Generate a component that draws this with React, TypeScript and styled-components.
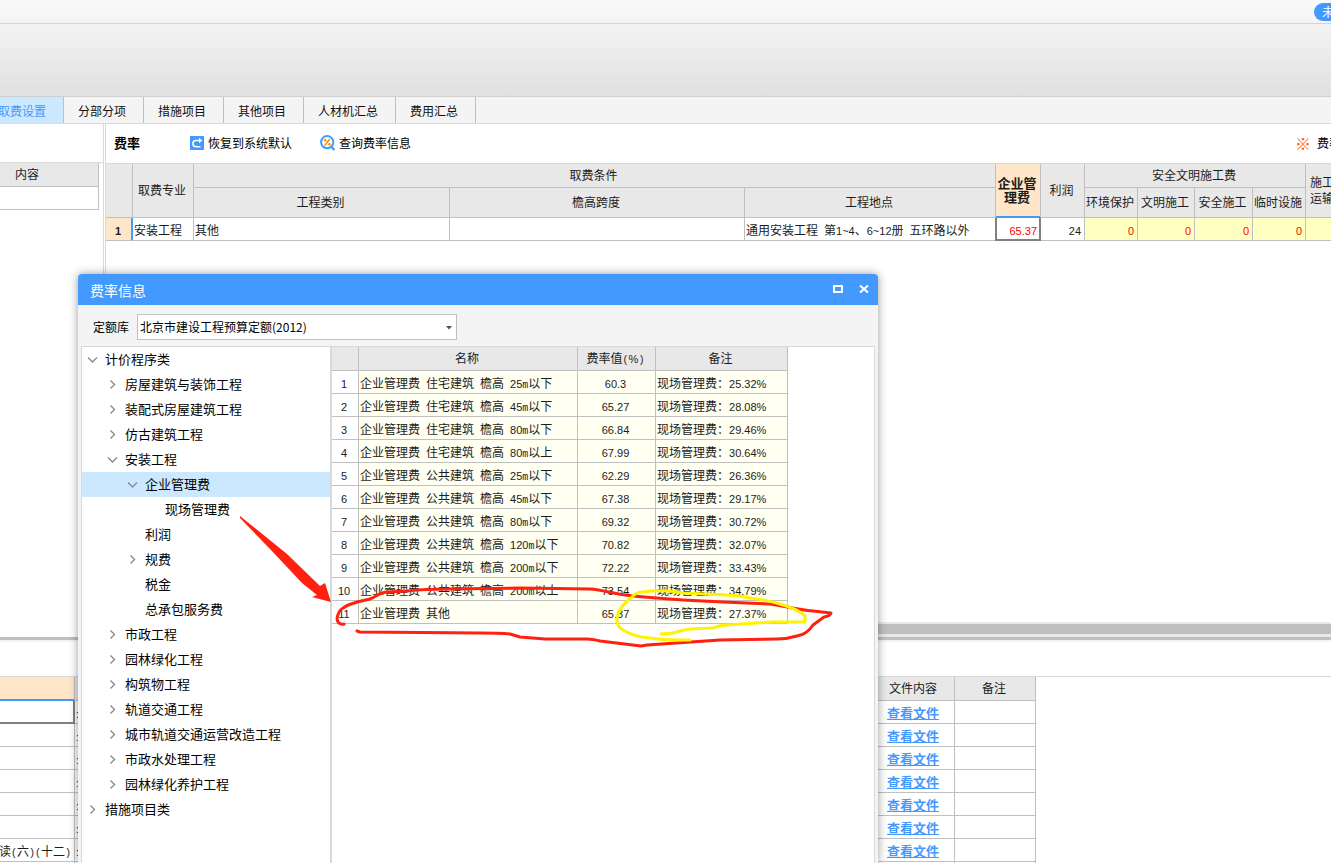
import React from "react";
import styled, { createGlobalStyle, css } from "styled-components";

const line = "#c0c0c0";
const softLine = "#d9d9d9";
const blue = "#4499ff";

const GlobalStyle = createGlobalStyle`
  *, *::before, *::after { box-sizing: border-box; }
  html, body, #root { height: 100%; }
  body {
    margin: 0;
    overflow: hidden;
    background: #fff;
    color: #1c1c1c;
    font-family: "Noto Sans CJK SC", sans-serif;
    font-size: 12px;
    line-height: 16px;
  }
  button, select { font: inherit; color: inherit; }
`;

/* ---------- text ---------- */

const Digits = styled.span`
  font-family: "Liberation Sans", sans-serif;
  font-size: 11px;
  line-height: 1;
`;

const HalfWidth = styled.span`
  font-family: "Liberation Mono", monospace;
  font-size: 10px;
  line-height: 1;
  white-space: pre;
`;

/* Chinese text keeps the base font; digits and half-width marks get their own. */
function Mixed({ text }: { text: string }) {
  const parts = text.match(/[ ()m]|[0-9.%~:]+|[^ ()m0-9.%~:]+/g) ?? [];
  return (
    <>
      {parts.map((p, i) => {
        if (/^[ ()m]$/.test(p)) return <HalfWidth key={i}>{p}</HalfWidth>;
        if (/^[0-9.%~:]/.test(p)) return <Digits key={i}>{p}</Digits>;
        return <React.Fragment key={i}>{p}</React.Fragment>;
      })}
    </>
  );
}

/* ---------- window frame ---------- */

const Screen = styled.div`
  position: relative;
  display: flex;
  flex-direction: column;
  height: 100vh;
  overflow: hidden;
`;

const TitleBar = styled.header`
  display: flex;
  justify-content: flex-end;
  align-items: center;
  height: 24px;
  flex: none;
  overflow: hidden;
  border-bottom: 1px solid #d4d4d4;
  background: linear-gradient(#fafafa, #f4f4f4);
`;

const LoginPill = styled.button`
  flex: none;
  height: 18px;
  margin-right: -35px;
  padding: 0 8px;
  border: 0;
  border-radius: 9px;
  background: ${blue};
  color: #fff;
  line-height: 18px;
`;

const Ribbon = styled.div`
  flex: none;
  height: 73px;
  border-bottom: 1px solid #cfcfcf;
  background: linear-gradient(#f3f3f3, #e0e0e0);
`;

const Tabs = styled.nav`
  display: flex;
  flex: none;
  height: 27px;
  margin-left: -16px;
  border-bottom: 1px solid #dcdcdc;
  background: #f4f4f4;
`;

const Tab = styled.button<{ $active?: boolean }>`
  flex: none;
  padding: 2px 17px 0 14px;
  border: 0;
  border-right: 1px solid ${line};
  background: ${(p) => (p.$active ? "#cce8ff" : "transparent")};
  color: ${(p) => (p.$active ? blue : "#111")};
`;

/* ---------- data grids ---------- */

const Grid = styled.table<{ $width: number }>`
  flex: none;
  width: ${(p) => p.$width}px;
  table-layout: fixed;
  border-collapse: separate;
  border-spacing: 0;
`;

const HeadCell = styled.th<{ $current?: boolean; $h?: number }>`
  height: ${(p) => p.$h ?? 24}px;
  padding: 0 2px 2px 0;
  border-right: 1px solid ${line};
  border-bottom: 1px solid ${line};
  background: #e8e8e8;
  font-weight: normal;
  white-space: nowrap;
  ${(p) =>
    p.$current &&
    css`
      border-bottom-color: ${blue};
      background: #ffe6c8;
      box-shadow: inset 0 -1px ${blue};
      font-size: 13px;
      line-height: 14px;
      font-weight: bold;
      white-space: normal;
    `}
`;

const Cell = styled.td<{
  $tone?: "cream" | "yellow" | "row";
  $align?: "center" | "right";
  $current?: boolean;
  $red?: boolean;
}>`
  position: relative;
  height: 23px;
  padding: 1px 3px 0 1px;
  overflow: hidden;
  border-right: 1px solid ${line};
  border-bottom: 1px solid ${line};
  background: ${(p) =>
    p.$tone === "cream" ? "#fffff2" : p.$tone === "yellow" ? "#ffffc0" : p.$tone === "row" ? "#ffe6c8" : "#fff"};
  color: ${(p) => (p.$red ? "#f00" : "inherit")};
  text-align: ${(p) => p.$align ?? "left"};
  white-space: nowrap;
  ${(p) =>
    p.$tone === "row" &&
    css`
      border-right-color: ${blue};
      box-shadow: inset -1px 0 ${blue};
      font-weight: bold;
    `}
  ${(p) =>
    p.$current &&
    css`
      overflow: visible;
      &::after {
        content: "";
        position: absolute;
        inset: 0 -1px -1px -1px;
        border: 2px solid #808080;
        border-top: 0;
      }
    `}
`;

/* ---------- upper area ---------- */

const Upper = styled.main`
  display: flex;
  flex: 1;
  min-height: 0;
`;

const SidePane = styled.section`
  flex: none;
  width: 104px;
  padding-top: 38px;
  overflow: hidden;
  border-right: 1px solid ${softLine};
`;

const SideGrid = styled.div`
  display: flex;
  justify-content: flex-end;
  padding-right: 4px;
  border-top: 1px solid ${softLine};
`;

const RatePane = styled.section`
  display: flex;
  flex: 1;
  flex-direction: column;
  min-width: 0;
  margin-left: 1px;
  border-left: 1px solid ${softLine};
  overflow: hidden;
`;

const Toolbar = styled.div`
  display: flex;
  flex: none;
  align-items: center;
  height: 39px;
  padding: 0 0 2px 8px;
  overflow: hidden;
  color: #000;
`;

const ToolbarTitle = styled.h1`
  width: 76px;
  margin: 0;
  font-size: 13px;
  line-height: 16px;
`;

const ToolButton = styled.button`
  display: flex;
  align-items: center;
  gap: 4px;
  margin-right: 28px;
  padding: 0;
  border: 0;
  background: none;
`;

const Hint = styled.div`
  display: flex;
  flex: none;
  gap: 6px;
  margin-left: auto;
  margin-right: -10px;
  white-space: nowrap;
`;

const HintMark = styled.span`
  color: #ff5a12;
  font-size: 16px;
`;

const RateGrid = styled.div`
  flex: 1;
  min-height: 0;
  overflow: hidden;
  border-top: 1px solid ${softLine};
`;

const ScrollTrack = styled.div`
  flex: none;
  height: 15px;
  border: solid #e8e8e8;
  border-width: 2px 0 3px;
  background: #bfbfbf;
`;

const Splitter = styled.div`
  flex: none;
  height: 5px;
  border-bottom: 2px solid #f4f4f4;
  background: #bfbfbf;
`;

/* ---------- lower area ---------- */

const Lower = styled.section`
  flex: none;
  height: 221px;
  padding-top: 34px;
  overflow: hidden;
`;

const FileGrid = styled.div`
  margin-left: -16px;
  border-top: 1px solid ${softLine};
`;

const FileLink = styled.a`
  color: ${blue};
  font-size: 13px;
  font-weight: bold;
`;

/* ---------- dialog ---------- */

const Dialog = styled.div`
  position: absolute;
  top: 274px;
  bottom: 0;
  left: 78px;
  display: flex;
  flex-direction: column;
  width: 800px;
  border-radius: 4px 4px 0 0;
  background: #f4f4f4;
  box-shadow: 0 0 10px rgba(0, 0, 0, 0.4);
`;

const DialogTitle = styled.div`
  display: flex;
  flex: none;
  align-items: center;
  height: 31px;
  padding: 0 9px 0 12px;
  border-radius: 4px 4px 0 0;
  background: ${blue};
  color: #fff;
  font-size: 14px;
`;

const WindowButton = styled.button`
  display: flex;
  width: 10px;
  margin-left: 16px;
  padding: 0 0 2px;
  border: 0;
  background: none;
`;

const Push = styled.span`
  flex: 1;
`;

const LibraryRow = styled.div`
  display: flex;
  flex: none;
  align-items: center;
  gap: 8px;
  height: 41px;
  padding: 3px 0 0 15px;
  color: #000;
`;

const SelectBox = styled.div`
  position: relative;
  width: 320px;
  svg {
    position: absolute;
    top: 12px;
    right: 5px;
    pointer-events: none;
  }
`;

const LibrarySelect = styled.select`
  width: 100%;
  height: 26px;
  padding: 0 18px 0 2px;
  border: 1px solid ${line};
  border-radius: 0;
  background: #fff;
  appearance: none;
`;

const DialogBody = styled.div`
  display: flex;
  flex: 1;
  min-height: 0;
  margin: 0 3px;
  overflow: hidden;
  border: solid ${softLine};
  border-width: 1px 1px 0;
  background: #fff;
`;

const Tree = styled.ul`
  flex: none;
  width: 250px;
  margin: 0;
  padding: 0;
  border-right: 2px solid ${softLine};
  list-style: none;
`;

const TreeItem = styled.li<{ $level: number; $selected?: boolean }>`
  display: flex;
  align-items: center;
  gap: 7px;
  height: 25px;
  padding-left: ${(p) => 5 + p.$level * 20}px;
  padding-bottom: 1px;
  background: ${(p) => (p.$selected ? "#cce8ff" : "transparent")};
  color: #000;
  font-size: 13px;
`;

const Toggle = styled.button`
  display: flex;
  flex: none;
  width: 11px;
  padding: 0;
  border: 0;
  background: none;
`;

const ToggleSpace = styled.span`
  flex: none;
  width: 11px;
`;

const Marks = styled.svg`
  position: absolute;
  top: 0;
  left: 0;
  pointer-events: none;
`;

/* ---------- icons ---------- */

const Chevron = ({ open }: { open: boolean }) => (
  <svg width="11" height="11" viewBox="0 0 11 11" fill="none" stroke="#8a8a8a" strokeWidth="1.4">
    <path d={open ? "M1 3.5 L5.5 8 L10 3.5" : "M3.5 1.5 L7.5 5.5 L3.5 9.5"} />
  </svg>
);

const RestoreIcon = () => (
  <svg width="14" height="14" viewBox="0 0 14 14">
    <rect width="14" height="14" rx="0.5" fill={blue} />
    <path d="M10 4.5 H6 A3.1 3.1 0 0 0 6 10.7 H10.5" fill="none" stroke="#fff" strokeWidth="1.6" />
    <path d="M9 1.8 L12.3 4.5 L9 7.2 Z" fill="#fff" />
  </svg>
);

const RateSearchIcon = () => (
  <svg width="15" height="16" viewBox="0 0 15 16" fill="none">
    <circle cx="7.2" cy="7.2" r="6.1" stroke={blue} strokeWidth="2" />
    <path d="M11.2 11.5 L14.3 15" stroke={blue} strokeWidth="2.4" />
    <path d="M9.9 4 L4.6 10.4" stroke="#ff9000" strokeWidth="1.6" />
    <circle cx="5.1" cy="5.2" r="1.3" fill="#ff9000" />
    <circle cx="9.5" cy="9.3" r="1.3" fill="#ff9000" />
  </svg>
);

/* ---------- data ---------- */

const tabs = ["取费设置", "分部分项", "措施项目", "其他项目", "人材机汇总", "费用汇总"];
const rateCols = [27, 61, 256, 295, 251, 45, 44, 53, 57, 58, 53, 59];
const safetyCols = ["环境保护", "文明施工", "安全施工", "临时设施"];

type Node = { label: string; level: number; open?: boolean; selected?: boolean };
const tree: Node[] = [
  { label: "计价程序类", level: 0, open: true },
  { label: "房屋建筑与装饰工程", level: 1, open: false },
  { label: "装配式房屋建筑工程", level: 1, open: false },
  { label: "仿古建筑工程", level: 1, open: false },
  { label: "安装工程", level: 1, open: true },
  { label: "企业管理费", level: 2, open: true, selected: true },
  { label: "现场管理费", level: 3 },
  { label: "利润", level: 2 },
  { label: "规费", level: 2, open: false },
  { label: "税金", level: 2 },
  { label: "总承包服务费", level: 2 },
  { label: "市政工程", level: 1, open: false },
  { label: "园林绿化工程", level: 1, open: false },
  { label: "构筑物工程", level: 1, open: false },
  { label: "轨道交通工程", level: 1, open: false },
  { label: "城市轨道交通运营改造工程", level: 1, open: false },
  { label: "市政水处理工程", level: 1, open: false },
  { label: "园林绿化养护工程", level: 1, open: false },
  { label: "措施项目类", level: 0, open: false },
];

const rates: [string, string, string][] = [
  ["企业管理费 住宅建筑 檐高 25m以下", "60.3", "25.32%"],
  ["企业管理费 住宅建筑 檐高 45m以下", "65.27", "28.08%"],
  ["企业管理费 住宅建筑 檐高 80m以下", "66.84", "29.46%"],
  ["企业管理费 住宅建筑 檐高 80m以上", "67.99", "30.64%"],
  ["企业管理费 公共建筑 檐高 25m以下", "62.29", "26.36%"],
  ["企业管理费 公共建筑 檐高 45m以下", "67.38", "29.17%"],
  ["企业管理费 公共建筑 檐高 80m以下", "69.32", "30.72%"],
  ["企业管理费 公共建筑 檐高 120m以下", "70.82", "32.07%"],
  ["企业管理费 公共建筑 檐高 200m以下", "72.22", "33.43%"],
  ["企业管理费 公共建筑 檐高 200m以上", "73.54", "34.79%"],
  ["企业管理费 其他", "65.37", "27.37%"],
];

const files = ["", "", "", "", "", "", "读(六)(十二)", ""];

const Cols = ({ widths }: { widths: number[] }) => (
  <colgroup>
    {widths.map((w, i) => (
      <col key={i} width={w} />
    ))}
  </colgroup>
);

/* ---------- sections ---------- */

const RateTable = () => (
  <Grid $width={1259}>
    <Cols widths={rateCols} />
    <thead>
      <tr>
        <HeadCell rowSpan={2} />
        <HeadCell rowSpan={2}>取费专业</HeadCell>
        <HeadCell colSpan={3}>取费条件</HeadCell>
        <HeadCell rowSpan={2} $current>
          企业管理费
        </HeadCell>
        <HeadCell rowSpan={2}>利润</HeadCell>
        <HeadCell colSpan={4}>安全文明施工费</HeadCell>
        <HeadCell rowSpan={2}>
          施工垃圾
          <br />
          运输费用
        </HeadCell>
      </tr>
      <tr>
        <HeadCell $h={30}>工程类别</HeadCell>
        <HeadCell $h={30}>檐高跨度</HeadCell>
        <HeadCell $h={30}>工程地点</HeadCell>
        {safetyCols.map((c) => (
          <HeadCell key={c} $h={30}>
            {c}
          </HeadCell>
        ))}
      </tr>
    </thead>
    <tbody>
      <tr>
        <Cell $tone="row" $align="center">
          <Mixed text="1" />
        </Cell>
        <Cell>安装工程</Cell>
        <Cell>其他</Cell>
        <Cell />
        <Cell>
          <Mixed text="通用安装工程 第1~4、6~12册 五环路以外" />
        </Cell>
        <Cell $align="right" $red $current>
          <Mixed text="65.37" />
        </Cell>
        <Cell $align="right">
          <Mixed text="24" />
        </Cell>
        {safetyCols.map((c) => (
          <Cell key={c} $tone="yellow" $align="right" $red>
            <Mixed text="0" />
          </Cell>
        ))}
        <Cell $tone="yellow" />
      </tr>
    </tbody>
  </Grid>
);

const RateDialog = () => (
  <Dialog role="dialog" aria-labelledby="rate-title">
    <DialogTitle>
      <span id="rate-title">费率信息</span>
      <Push />
      <WindowButton aria-label="最大化">
        <svg width="10" height="10" viewBox="0 0 10 10">
          <rect x="1" y="2" width="8" height="6" fill="none" stroke="#fff" strokeWidth="2" />
        </svg>
      </WindowButton>
      <WindowButton aria-label="关闭">
        <svg width="10" height="10" viewBox="0 0 10 10">
          <path d="M1 1.5 L9 8.5 M9 1.5 L1 8.5" stroke="#fff" strokeWidth="2.2" />
        </svg>
      </WindowButton>
    </DialogTitle>
    <LibraryRow>
      <label htmlFor="library">定额库</label>
      <SelectBox>
        <LibrarySelect id="library">
          <option>北京市建设工程预算定额(2012)</option>
        </LibrarySelect>
        <svg width="6" height="4" viewBox="0 0 6 4">
          <path d="M0 0 H6 L3 3.5 Z" fill="#555" />
        </svg>
      </SelectBox>
    </LibraryRow>
    <DialogBody>
      <Tree role="tree">
        {tree.map((n) => (
          <TreeItem key={n.label} role="treeitem" aria-selected={!!n.selected} $level={n.level} $selected={n.selected}>
            {n.open === undefined ? (
              <ToggleSpace />
            ) : (
              <Toggle aria-label={n.open ? "收起" : "展开"}>
                <Chevron open={n.open} />
              </Toggle>
            )}
            <span>{n.label}</span>
          </TreeItem>
        ))}
      </Tree>
      <div>
        <Grid $width={456}>
          <Cols widths={[27, 219, 78, 132]} />
          <thead>
            <tr>
              <HeadCell />
              <HeadCell>名称</HeadCell>
              <HeadCell>
                <Mixed text="费率值(%)" />
              </HeadCell>
              <HeadCell>备注</HeadCell>
            </tr>
          </thead>
          <tbody>
            {rates.map(([name, value, note], i) => (
              <tr key={name}>
                <Cell $align="center">
                  <Mixed text={String(i + 1)} />
                </Cell>
                <Cell $tone="cream">
                  <Mixed text={name} />
                </Cell>
                <Cell $tone="cream" $align="center">
                  <Mixed text={value} />
                </Cell>
                <Cell $tone="cream">
                  <Mixed text={"现场管理费：" + note} />
                </Cell>
              </tr>
            ))}
          </tbody>
        </Grid>
      </div>
    </DialogBody>
    <Marks width="800" height="589" viewBox="78 274 800 589" fill="none" strokeWidth="3" strokeLinecap="round" strokeLinejoin="round" aria-hidden="true">
      <path fill="#ff2010" d="M240 516 L287 554 L320 586 L325 583 L331 602 L312 597 L317 595 L302 583 L270 549 L240 518 Z" />
      <path
        stroke="#ff2010"
        d="M344 624 Q338 625 337 619 Q338 611 343 608 C348 604 352 604 357 602 L370 599 C377 596 381 592 387 592 L407 591 Q425 589 447 589 L520 588 L590 589 C605 590 612 594 633 596 Q655 598 683 600 L723 602 L770 604 C785 606 797 610 813 611 L831 613 Q830 616 824 617 L813 625 C808 633 803 635 797 636 Q787 639 777 639 L720 640 L647 645 L641 646 L600 641 Q592 639 587 639 L545 639 L520 637 L510 634 Q500 633 480 633 L360 632 L357 631"
      />
      <path
        stroke="#fff200"
        d="M661 634 L673 633 Q683 630 690 629 L713 628 Q721 625 727 625 L773 622 L805 622 V616 Q800 610 780 604 Q766 600 750 598 Q738 595 727 595 L683 593 Q675 591 667 591 Q655 590 643 592 Q636 592 632 597 Q619 607 617 618 Q616 626 623 630 Q634 637 650 638 Q660 640 690 640"
      />
    </Marks>
  </Dialog>
);

export default function App() {
  return (
    <Screen>
      <GlobalStyle />
      <TitleBar>
        <LoginPill>未登录</LoginPill>
      </TitleBar>
      <Ribbon />
      <Tabs>
        {tabs.map((t, i) => (
          <Tab key={t} $active={i === 0}>
            {t}
          </Tab>
        ))}
      </Tabs>
      <Upper>
        <SidePane>
          <SideGrid>
            <Grid $width={141}>
              <thead>
                <tr>
                  <HeadCell>内容</HeadCell>
                </tr>
              </thead>
              <tbody>
                <tr>
                  <Cell />
                </tr>
              </tbody>
            </Grid>
          </SideGrid>
        </SidePane>
        <RatePane>
          <Toolbar>
            <ToolbarTitle>费率</ToolbarTitle>
            <ToolButton>
              <RestoreIcon />
              恢复到系统默认
            </ToolButton>
            <ToolButton>
              <RateSearchIcon />
              查询费率信息
            </ToolButton>
            <Hint>
              <HintMark>※</HintMark>费率
            </Hint>
          </Toolbar>
          <RateGrid>
            <RateTable />
          </RateGrid>
          <ScrollTrack />
        </RatePane>
      </Upper>
      <Splitter />
      <Lower>
        <FileGrid>
          <Grid $width={1052}>
            <Cols widths={[91, 799, 81, 81]} />
            <thead>
              <tr>
                <HeadCell $current />
                <HeadCell />
                <HeadCell>文件内容</HeadCell>
                <HeadCell>备注</HeadCell>
              </tr>
            </thead>
            <tbody>
              {files.map((name, i) => (
                <tr key={i}>
                  <Cell $align="right" $current={i === 0}>
                    <Mixed text={name} />
                  </Cell>
                  <Cell>
                    <Mixed text=":" />
                  </Cell>
                  <Cell $align="center">
                    <FileLink href="#file">查看文件</FileLink>
                  </Cell>
                  <Cell />
                </tr>
              ))}
            </tbody>
          </Grid>
        </FileGrid>
      </Lower>
      <RateDialog />
    </Screen>
  );
}
